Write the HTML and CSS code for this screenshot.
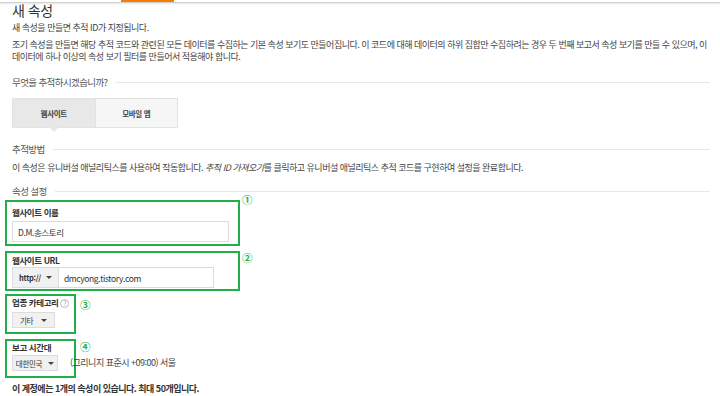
FILE: index.html
```html
<!DOCTYPE html>
<html lang="ko">
<head>
    <meta charset="UTF-8">
    <title>새 속성</title>
    <link rel="stylesheet" href="styles.css">
</head>
<body>
    <div class="topbar"><span class="topbar-active"></span></div>

    <div class="page">
        <h1>새 속성</h1>
        <p class="note">새 속성을 만들면 추적 ID가 지정됩니다.</p>
        <p class="desc">조기 속성을 만들면 해당 추적 코드와 관련된 모든 데이터를 수집하는 기본 속성 보기도 만들어집니다. 이 코드에 대해 데이터의 하위 집합만 수집하려는 경우 두 번째 보고서 속성 보기를 만들 수 있으며, 이 데이터에 하나 이상의 속성 보기 필터를 만들어서 적용해야 합니다.</p>

        <div class="section-head">무엇을 추적하시겠습니까?</div>
        <div class="tabs">
            <button class="tab active">웹사이트</button>
            <button class="tab">모바일 앱</button>
        </div>

        <div class="section-head">추적방법</div>
        <p class="method">이 속성은 유니버설 애널리틱스를 사용하여 작동합니다. <em>추적 ID 가져오기</em>를 클릭하고 유니버설 애널리틱스 추적 코드를 구현하여 설정을 완료합니다.</p>

        <div class="section-head">속성 설정</div>

        <div class="field-row row-name">
            <div class="field wide">
                <label>웹사이트 이름</label>
                <input class="text-input name" type="text" value="D.M.송스토리">
            </div>
            <span class="mark">①</span>
        </div>

        <div class="field-row row-url">
            <div class="field wide">
                <label>웹사이트 URL</label>
                <div class="url-row">
                    <span class="dropdown proto">http:// <i class="caret"></i></span>
                    <input class="text-input site" type="text" value="dmcyong.tistory.com">
                </div>
            </div>
            <span class="mark">②</span>
        </div>

        <div class="field-row row-category">
            <div class="field narrow">
                <label>업종 카테고리 <span class="help">?</span></label>
                <span class="dropdown">기타 <i class="caret"></i></span>
            </div>
            <span class="mark">③</span>
        </div>

        <div class="field-row row-zone">
            <div class="field narrow">
                <label>보고 시간대</label>
                <span class="dropdown">대한민국 <i class="caret"></i></span>
                <span class="tz">(그리니지 표준시 +09:00) 서울</span>
            </div>
            <span class="mark">④</span>
        </div>

        <p class="limit">이 계정에는 1개의 속성이 있습니다. 최대 50개입니다.</p>
    </div>
</body>
</html>
```

FILE: styles.css
```css
* {
    margin: 0;
    padding: 0;
    box-sizing: border-box;
}

body {
    font-family: "Noto Sans CJK KR", "Noto Sans", sans-serif;
    background: #fff;
    color: #444;
    font-size: 9px;
    letter-spacing: -0.5px;
    width: 720px;
    height: 396px;
    overflow: hidden;
}

.topbar {
    height: 3px;
    border-bottom: 1px solid #d2d2d2;
    box-shadow: 0 1px 2px rgba(0, 0, 0, 0.1);
    position: relative;
}

.topbar-active {
    position: absolute;
    left: 121px;
    top: 0;
    width: 53px;
    height: 2px;
    background: #f57c00;
}

.page {
    padding: 0 10px 0 12px;
}

h1 {
    font-size: 14px;
    font-weight: 400;
    color: #333;
    line-height: 14px;
    margin-top: 0;
    letter-spacing: -0.5px;
}

.note {
    margin-top: 5px;
    line-height: 12px;
}

.desc {
    margin-top: 5px;
    line-height: 12px;
}

.section-head {
    display: flex;
    align-items: center;
    gap: 8px;
    font-size: 9.5px;
    letter-spacing: -0.6px;
    color: #555;
    line-height: 14px;
}

.section-head::after {
    content: "";
    flex: 1;
    height: 1px;
    background: #e6e6e6;
}

.desc + .section-head {
    margin-top: 12px;
}

.tabs {
    display: flex;
    margin-top: 9px;
    width: 166px;
}

.tab {
    flex: 1;
    height: 30px;
    border: 1px solid #e2e2e2;
    background: #f6f6f6;
    font-family: inherit;
    font-size: 7.5px;
    letter-spacing: -0.3px;
    color: #444;
    font-weight: 700;
    position: relative;
}

.tab.active {
    background: #e8e8e8;
    border-right: none;
}

.tab.active::after {
    content: "";
    position: absolute;
    left: 50%;
    bottom: -5px;
    margin-left: -5px;
    border-left: 5px solid transparent;
    border-right: 5px solid transparent;
    border-top: 5px solid #e8e8e8;
}

.tabs + .section-head {
    margin-top: 14px;
}

.method {
    margin-top: 6px;
    line-height: 12px;
}

.method + .section-head {
    margin-top: 10px;
}

.field-row {
    display: flex;
    align-items: flex-start;
    margin-left: -7px;
}

.field {
    border: 2px solid #1fae47;
    padding: 0 5px;
}

.field.wide {
    width: 235px;
}

.field.narrow {
    width: 71px;
    position: relative;
}

.mark {
    color: #1fae47;
    font-size: 10.5px;
    line-height: 10px;
    margin-left: 2px;
    font-weight: 700;
    letter-spacing: 0;
}

.row-name {
    margin-top: 2px;
}

.row-name .field {
    padding: 4px 5px 2px;
}

.row-name .mark {
    margin-top: -5px;
}

.row-url {
    margin-top: 5px;
}

.row-url .field {
    padding: 1px 5px 1px;
}

.row-url .mark {
    margin-top: 2px;
}

.row-category {
    margin-top: 3px;
}

.row-category .field {
    padding: 0 5px 4px;
}

.row-category .mark {
    margin: 6px 0 0 4px;
}

.row-zone {
    margin-top: 5px;
}

.row-zone .field {
    padding: 0 5px 5px;
}

.row-zone .mark {
    margin: 3px 0 0 4px;
}

label {
    display: block;
    font-weight: 700;
    color: #333;
    line-height: 12px;
    font-size: 8.5px;
    letter-spacing: -0.4px;
    white-space: nowrap;
}

.text-input {
    display: block;
    height: 21px;
    border: 1px solid #dcdcdc;
    font-family: inherit;
    font-size: 8.5px;
    letter-spacing: -0.4px;
    color: #333;
    padding: 0 5px;
    outline: none;
}

.text-input.name {
    width: 217px;
    margin-top: 3px;
}

.url-row {
    display: flex;
    margin-top: 1px;
}

.text-input.site {
    width: 156px;
}

.dropdown {
    display: inline-flex;
    align-items: center;
    justify-content: center;
    gap: 8px;
    width: 43px;
    height: 16px;
    background: #f1f1f1;
    border: 1px solid #dcdcdc;
    font-size: 7.5px;
    letter-spacing: -0.3px;
    color: #333;
}

.row-category .dropdown {
    margin-top: 4px;
}

.row-zone .dropdown {
    width: 46px;
    gap: 6px;
    margin-top: 2px;
}

.dropdown.proto {
    height: 21px;
    width: 46px;
    gap: 5px;
    border-right: none;
    font-weight: 700;
}

.caret {
    width: 0;
    height: 0;
    border-left: 3px solid transparent;
    border-right: 3px solid transparent;
    border-top: 3px solid #444;
}

.help {
    display: inline-block;
    width: 9px;
    height: 9px;
    border: 1px solid #bbb;
    border-radius: 50%;
    color: #aaa;
    font-size: 7px;
    line-height: 7px;
    text-align: center;
    font-weight: 400;
    letter-spacing: 0;
    vertical-align: middle;
}

.tz {
    position: absolute;
    left: 63px;
    bottom: 7px;
    line-height: 12px;
    white-space: nowrap;
    color: #444;
}

.limit {
    margin-top: 5px;
    font-weight: 700;
    color: #333;
    line-height: 12px;
}
```
